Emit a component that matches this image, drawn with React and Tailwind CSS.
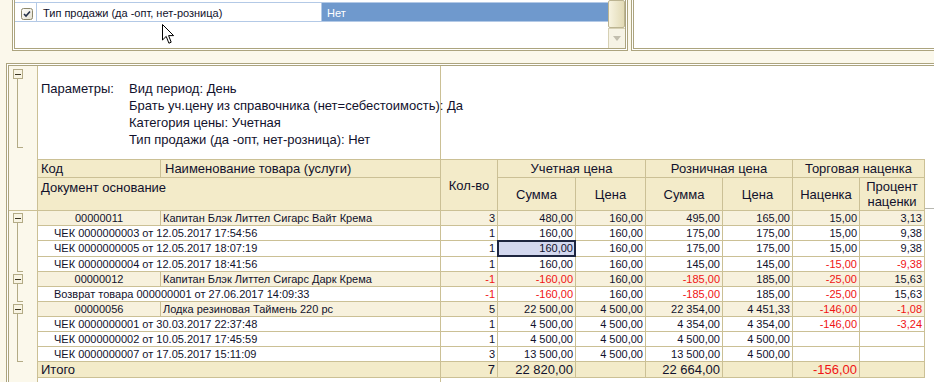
import React from 'react';

const LINE = 'border-[#cbc095]';
const RED = 'text-[#f01414]';

const rows = [
  { group: true, code: '00000011', name: 'Капитан Блэк Литтел Сигарс Вайт Крема', tree: 'open', v: ['3', '480,00', '160,00', '495,00', '165,00', '15,00', '3,13'] },
  { doc: 'ЧЕК 0000000003 от 12.05.2017 17:54:56', tree: 'mid', v: ['1', '160,00', '160,00', '175,00', '175,00', '15,00', '9,38'] },
  { doc: 'ЧЕК 0000000005 от 12.05.2017 18:07:19', tree: 'mid', tall: true, selected: true, v: ['1', '160,00', '160,00', '175,00', '175,00', '15,00', '9,38'] },
  { doc: 'ЧЕК 0000000004 от 12.05.2017 18:41:56', tree: 'last', v: ['1', '160,00', '160,00', '145,00', '145,00', '-15,00', '-9,38'] },
  { group: true, code: '00000012', name: 'Капитан Блэк Литтел Сигарс Дарк Крема', tree: 'open', v: ['-1', '-160,00', '160,00', '-185,00', '185,00', '-25,00', '15,63'] },
  { doc: 'Возврат товара 000000001 от 27.06.2017 14:09:33', tree: 'last', v: ['-1', '-160,00', '160,00', '-185,00', '185,00', '-25,00', '15,63'] },
  { group: true, code: '00000056', name: 'Лодка резиновая Таймень 220 рс', tree: 'open', v: ['5', '22 500,00', '4 500,00', '22 354,00', '4 451,33', '-146,00', '-1,08'] },
  { doc: 'ЧЕК 0000000001 от 30.03.2017 22:37:48', tree: 'mid', v: ['1', '4 500,00', '4 500,00', '4 354,00', '4 354,00', '-146,00', '-3,24'] },
  { doc: 'ЧЕК 0000000002 от 10.05.2017 17:45:59', tree: 'mid', v: ['1', '4 500,00', '4 500,00', '4 500,00', '4 500,00', '', ''] },
  { doc: 'ЧЕК 0000000007 от 17.05.2017 15:11:09', tree: 'last', v: ['3', '13 500,00', '4 500,00', '13 500,00', '4 500,00', '', ''] },
];

// widths of the numeric columns: Кол-во, Сумма, Цена, Сумма, Цена, Наценка, Процент
const numW = ['w-[57px]', 'w-[78px]', 'w-[70px]', 'w-[77px]', 'w-[70px]', 'w-[67px]', 'w-[65px]'];

const MinusBox = ({ top }) => (
  <span className={`absolute left-[4px] ${top} w-[10px] h-[10px] border border-[#b3ab86] bg-[#f8f4e3] flex items-center justify-center`}>
    <span className="block w-[6px] h-px bg-[#3b3520]" />
  </span>
);

const Tree = ({ kind }) => (
  <div className={`relative w-[29px] shrink-0 border-r ${LINE} bg-[#fbf8eb]`}>
    {kind === 'open' && (
      <>
        <MinusBox top="top-[2px]" />
        <span className="absolute left-[8px] top-[12px] bottom-0 w-px bg-[#b3ab86]" />
      </>
    )}
    {kind === 'mid' && <span className="absolute left-[8px] top-0 bottom-0 w-px bg-[#b3ab86]" />}
    {kind === 'last' && (
      <>
        <span className="absolute left-[8px] top-0 bottom-0 w-px bg-[#b3ab86]" />
        <span className="absolute left-[8px] bottom-0 w-[6px] h-px bg-[#b3ab86]" />
      </>
    )}
  </div>
);

const Num = ({ w, value, selected }) => (
  <div
    className={`relative ${w} shrink-0 border-r ${LINE} flex items-center justify-end pr-[2px] ${
      value.startsWith('-') ? RED : ''
    } ${selected ? 'bg-[#d3d8ef]' : ''}`}
  >
    {selected && (
      <span className="absolute left-[-1px] top-[-1px] right-[-1px] bottom-[-1px] border-2 border-[#1e2640]" />
    )}
    <span className="relative">{value}</span>
  </div>
);

const DataRow = ({ r }) => (
  <div className={`flex ${r.tall ? 'h-[16px]' : 'h-[15px]'}`}>
    <Tree kind={r.tree} />
    <div className={`flex border-b ${LINE} ${r.group ? 'bg-[#f7f1dd]' : 'bg-white'} text-[11px] leading-[13px]`}>
      {r.group ? (
        <>
          <div className={`w-[123px] shrink-0 border-r ${LINE} flex items-center justify-center`}>{r.code}</div>
          <div className={`w-[280px] shrink-0 border-r ${LINE} flex items-center pl-[2px] whitespace-nowrap`}>{r.name}</div>
        </>
      ) : (
        <div className={`w-[403px] shrink-0 border-r ${LINE} flex items-center pl-[16px] whitespace-nowrap`}>{r.doc}</div>
      )}
      {r.v.map((value, i) => (
        <Num key={i} w={numW[i]} value={value} selected={r.selected && i === 1} />
      ))}
    </div>
  </div>
);

const GroupHead = ({ title, cols }) => (
  <div className="flex flex-col">
    <div className={`h-[18px] border-b border-r ${LINE} flex items-center justify-center`}>{title}</div>
    <div className="flex h-[33px]">
      {cols.map(([label, w]) => (
        <div key={label} className={`${w} shrink-0 border-b border-r ${LINE} flex items-center justify-center text-center leading-[15px]`}>
          {label}
        </div>
      ))}
    </div>
  </div>
);

const Checkbox = () => (
  <svg width="12" height="12" viewBox="0 0 12 12">
    <defs>
      <linearGradient id="cb" x1="0" y1="0" x2="1" y2="1">
        <stop offset="0" stopColor="#ffffff" />
        <stop offset="1" stopColor="#e4e0d0" />
      </linearGradient>
    </defs>
    <rect x="0.5" y="0.5" width="11" height="11" rx="2" fill="url(#cb)" stroke="#8d886b" />
    <path d="M3 6 L5 8 L9 3.5" fill="none" stroke="#23304a" strokeWidth="1.6" />
  </svg>
);

const Cursor = () => (
  <svg className="absolute left-[162px] top-[24px]" width="13" height="21" viewBox="0 0 13 21">
    <path d="M0.5 0.5 L0.5 16 L4.2 12.4 L6.9 19.2 L9.2 18.2 L6.6 11.6 L11.6 11.6 Z" fill="#ffffff" stroke="#000000" strokeWidth="1" strokeLinejoin="miter" />
  </svg>
);

export default function App() {
  return (
    <div className="relative w-[934px] h-[382px] overflow-hidden bg-[#fbf8eb] text-[#11112c] font-['Liberation_Sans',Arial,sans-serif]">
      {/* top panels */}
      <div className="flex h-[51px]">
        <div className="ml-[12px] w-[616px] shrink-0 flex border-l-[3px] border-r-[3px] border-b-[3px] border-double border-[#aca47e] bg-white">
          <div className="flex-1 flex flex-col">
            <div className="mt-[2px] h-[20px] flex border-t border-b border-[#b3c9e6] text-[11px] leading-[13px]">
              <div className="w-[22px] shrink-0 border-r border-[#b3c9e6] flex justify-center pt-[5px] pl-[2px]">
                <Checkbox />
              </div>
              <div className="w-[285px] shrink-0 border-r border-[#b3c9e6] pl-[6px] pt-[4px] whitespace-nowrap">
                Тип продажи (да -опт, нет-розница)
              </div>
              <div className="flex-1 bg-[#6f99cd] text-white pl-[5px] pt-[4px]">Нет</div>
            </div>
          </div>
          <div className="w-[17px] shrink-0 flex flex-col">
            <div className="h-[28px] border border-[#bcb491] rounded-[2px] bg-gradient-to-r from-[#f7f3e0] to-[#e2dab5]" />
            <div className="flex-1 flex items-center justify-center bg-[#f6f3e5] border-l border-t border-[#d6d0b4]">
              <svg width="8" height="5" viewBox="0 0 8 5">
                <path d="M0 0 L8 0 L4 5 Z" fill="#c2beae" />
              </svg>
            </div>
          </div>
        </div>
        <div className="ml-[3px] flex-1 border-l-[3px] border-b-[3px] border-double border-[#aca47e] bg-white" />
      </div>

      {/* report panel */}
      <div className="mt-[12px] ml-[6px] h-[319px] flex flex-col border-t-[3px] border-l-[3px] border-double border-[#aca47e] bg-white">
        {/* parameters */}
        <div className="flex h-[93px] shrink-0">
          <div className={`relative w-[29px] shrink-0 border-r ${LINE} bg-[#fbf8eb]`}>
            <MinusBox top="top-[3px]" />
            <span className="absolute left-[8px] top-[13px] h-[69px] w-px bg-[#b3ab86]" />
            <span className="absolute left-[8px] top-[81px] w-[6px] h-px bg-[#b3ab86]" />
          </div>
          <div className={`w-[403px] shrink-0 border-r ${LINE} flex pt-[14px] pl-[3px] text-[13px] leading-[17px]`}>
            <div className="w-[88px] shrink-0">Параметры:</div>
            <div className="whitespace-nowrap">
              <div>Вид период: День</div>
              <div>Брать уч.цену из справочника (нет=себестоимость): Да</div>
              <div>Категория цены: Учетная</div>
              <div>Тип продажи (да -опт, нет-розница): Нет</div>
            </div>
          </div>
          <div className="flex-1" />
        </div>

        {/* header */}
        <div className="flex shrink-0 h-[52px]">
          <div className={`w-[29px] shrink-0 border-r border-b ${LINE} bg-[#fbf8eb]`} />
          <div className={`flex border-t ${LINE} bg-[#f3ebc9] text-[13px] leading-[15px]`}>
            <div className="flex flex-col w-[403px] shrink-0">
              <div className={`flex h-[18px] border-b ${LINE}`}>
                <div className={`w-[123px] shrink-0 border-r ${LINE} flex items-center pl-[3px]`}>Код</div>
                <div className={`flex-1 border-r ${LINE} flex items-center pl-[4px]`}>Наименование товара (услуги)</div>
              </div>
              <div className={`h-[33px] border-b border-r ${LINE} pl-[3px] pt-[2px]`}>Документ основание</div>
            </div>
            <div className={`w-[57px] shrink-0 border-b border-r ${LINE} flex items-center justify-center`}>Кол-во</div>
            <GroupHead title="Учетная цена" cols={[['Сумма', 'w-[78px]'], ['Цена', 'w-[70px]']]} />
            <GroupHead title="Розничная цена" cols={[['Сумма', 'w-[77px]'], ['Цена', 'w-[70px]']]} />
            <GroupHead title="Торговая наценка" cols={[['Наценка', 'w-[67px]'], ['Процент наценки', 'w-[65px]']]} />
          </div>
          <div className="flex-1 flex flex-col justify-end">
            <div className="h-px bg-[#b8b8b0] mb-[2px]" />
          </div>
        </div>

        {/* data rows */}
        {rows.map((r, i) => (
          <DataRow key={i} r={r} />
        ))}

        {/* total */}
        <div className="flex h-[16px] shrink-0">
          <Tree kind="none" />
          <div className={`flex border-b ${LINE} bg-[#f3ebc9] text-[13px] leading-[15px]`}>
            <div className={`w-[403px] shrink-0 border-r ${LINE} flex items-center pl-[3px]`}>Итого</div>
            <Num w="w-[57px]" value="7" />
            <Num w="w-[78px]" value="22 820,00" />
            <Num w="w-[70px]" value="" />
            <Num w="w-[77px]" value="22 664,00" />
            <Num w="w-[70px]" value="" />
            <Num w="w-[67px]" value="-156,00" />
            <Num w="w-[65px]" value="" />
          </div>
        </div>

        <div className="flex flex-1">
          <div className={`w-[29px] shrink-0 border-r ${LINE} bg-[#fbf8eb]`} />
          <div className={`w-[403px] shrink-0 border-r ${LINE}`} />
        </div>
      </div>

      <Cursor />
    </div>
  );
}
